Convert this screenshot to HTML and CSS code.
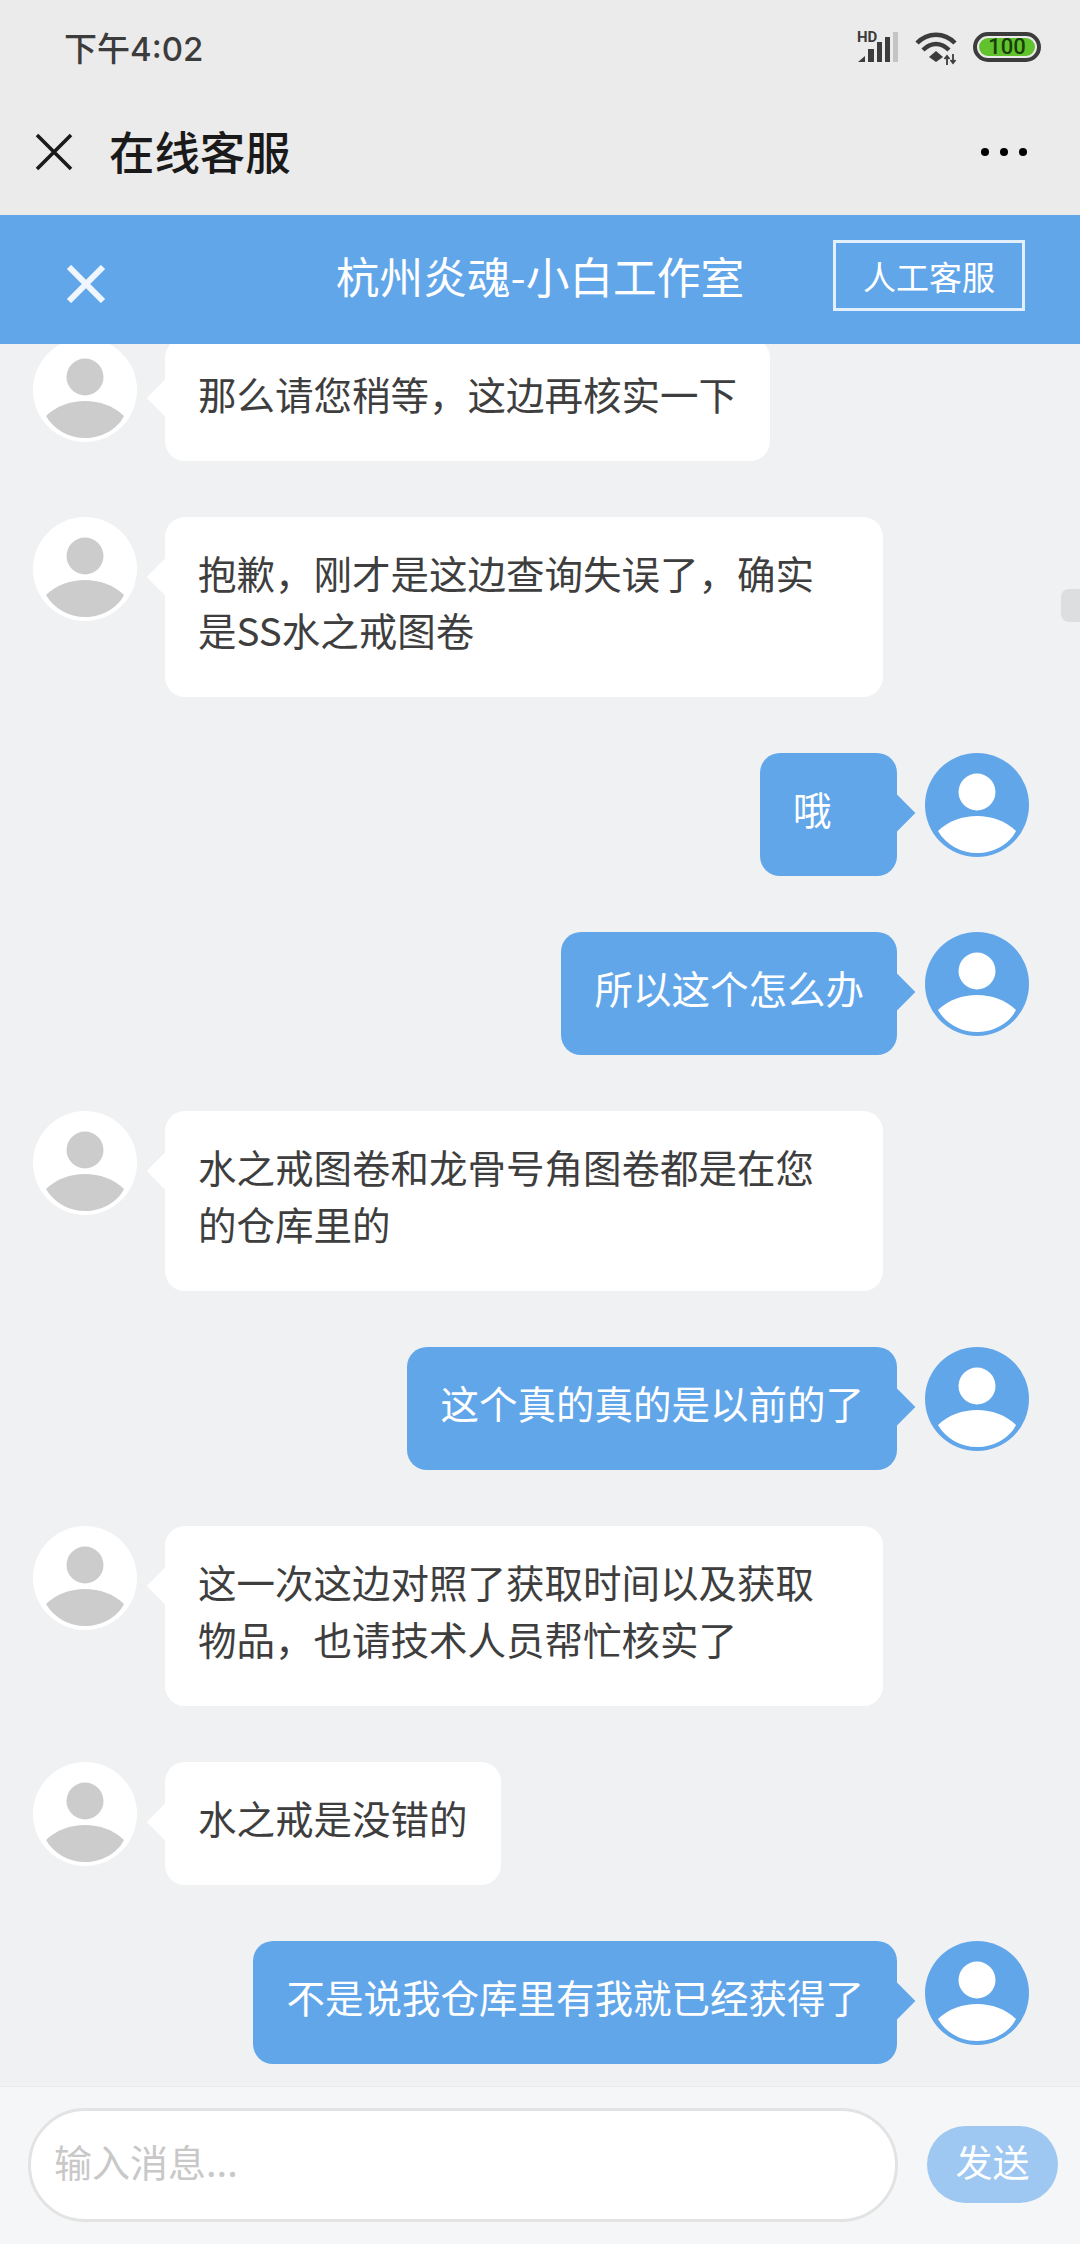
FILE: index.html
```html
<!DOCTYPE html>
<html lang="zh-CN">
<head>
    <meta charset="UTF-8">
    <meta name="viewport" content="width=device-width, initial-scale=1.0">
    <title>在线客服</title>
    <link rel="stylesheet" href="styles.css">
</head>
<body>
    <svg class="defs" width="0" height="0">
        <symbol id="person" viewBox="0 0 104 104">
            <circle cx="52" cy="39" r="18.5"/>
            <path d="M13 78C23 68 38 63 52 63C66 63 81 68 91 78C84 92 68 100 52 100C36 100 21 92 13 78Z"/>
        </symbol>
    </svg>

    <div class="status-bar">
        <span class="time">下午4:02</span>
        <div class="status-icons">
            <div class="signal">
                <span class="hd">HD</span>
                <svg class="signal-bars" width="42" height="32" viewBox="0 0 42 32">
                    <path d="M1 31L8 25V31Z" fill="#3c3c3c"/>
                    <rect x="11" y="18" width="6" height="13" fill="#3c3c3c"/>
                    <rect x="20" y="11" width="5" height="20" fill="#3c3c3c"/>
                    <rect x="28" y="6" width="5" height="25" fill="#3c3c3c"/>
                    <rect x="36" y="1" width="5" height="30" fill="#c4c4c4"/>
                </svg>
            </div>
            <svg class="wifi" width="42" height="34" viewBox="0 0 42 34">
                <path d="M2 12C13 1 29 1 40 12" fill="none" stroke="#3c3c3c" stroke-width="4.5"/>
                <path d="M8 19C16 11 26 11 34 19" fill="none" stroke="#3c3c3c" stroke-width="4.5"/>
                <path d="M14 26L21 20L28 26L21 31Z" fill="#3c3c3c"/>
                <path d="M32 25V34M34.5 28L32 25L29.5 28M38 23V32M35.5 29L38 32L40.5 29" fill="none" stroke="#3c3c3c" stroke-width="1.8"/>
            </svg>
            <div class="battery"><span class="battery-level">100</span></div>
        </div>
    </div>

    <div class="nav-bar">
        <svg class="nav-close" width="38" height="38" viewBox="0 0 38 38">
            <path d="M2 2L36 36M36 2L2 36" stroke="#1a1a1a" stroke-width="3.6" fill="none"/>
        </svg>
        <span class="nav-title">在线客服</span>
        <div class="nav-more"><i></i><i></i><i></i></div>
    </div>

    <div class="chat-header">
        <div class="header-left">
            <svg class="header-close" width="40" height="38" viewBox="0 0 40 38">
                <path d="M3 2L37 36M37 2L3 36" stroke="#fff" stroke-width="6" fill="none" opacity="0.9"/>
            </svg>
        </div>
        <span class="header-title">杭州炎魂-小白工作室</span>
        <div class="header-right">
            <button class="human-btn">人工客服</button>
        </div>
    </div>

    <div class="chat-list">
        <div class="msg">
            <svg class="avatar"><use href="#person"/></svg>
            <div class="bubble">那么请您稍等，这边再核实一下</div>
        </div>
        <div class="msg">
            <svg class="avatar"><use href="#person"/></svg>
            <div class="bubble">抱歉，刚才是这边查询失误了，确实是SS水之戒图卷</div>
        </div>
        <div class="msg mine">
            <div class="bubble">哦</div>
            <svg class="avatar"><use href="#person"/></svg>
        </div>
        <div class="msg mine">
            <div class="bubble">所以这个怎么办</div>
            <svg class="avatar"><use href="#person"/></svg>
        </div>
        <div class="msg">
            <svg class="avatar"><use href="#person"/></svg>
            <div class="bubble">水之戒图卷和龙骨号角图卷都是在您的仓库里的</div>
        </div>
        <div class="msg mine">
            <div class="bubble">这个真的真的是以前的了</div>
            <svg class="avatar"><use href="#person"/></svg>
        </div>
        <div class="msg">
            <svg class="avatar"><use href="#person"/></svg>
            <div class="bubble">这一次这边对照了获取时间以及获取物品，也请技术人员帮忙核实了</div>
        </div>
        <div class="msg">
            <svg class="avatar"><use href="#person"/></svg>
            <div class="bubble">水之戒是没错的</div>
        </div>
        <div class="msg mine">
            <div class="bubble">不是说我仓库里有我就已经获得了</div>
            <svg class="avatar"><use href="#person"/></svg>
        </div>
        <div class="scroll-thumb"></div>
    </div>

    <div class="input-bar">
        <input type="text" class="msg-input" placeholder="输入消息...">
        <button class="send-btn">发送</button>
    </div>
</body>
</html>
```

FILE: styles.css
```css
* {
    box-sizing: border-box;
}

body {
    margin: 0;
    width: 1080px;
    height: 2244px;
    display: flex;
    flex-direction: column;
    overflow: hidden;
    font-family: "Noto Sans CJK SC", "Noto Sans", sans-serif;
    background-color: #eff1f3;
}

.defs {
    position: absolute;
}

.status-bar {
    height: 96px;
    flex: none;
    display: flex;
    align-items: center;
    justify-content: space-between;
    padding: 0 39px 2px 64px;
    background-color: #ebebeb;
}

.time {
    font-family: Inter, "Noto Sans CJK SC", sans-serif;
    font-size: 33px;
    font-weight: 500;
    color: #3c3c3c;
}

.status-icons {
    display: flex;
    align-items: center;
    gap: 16px;
}

.signal {
    position: relative;
    width: 42px;
    height: 32px;
}

.signal-bars {
    display: block;
}

.hd {
    position: absolute;
    top: 0;
    left: 0;
    font-family: Roboto, sans-serif;
    font-size: 15px;
    font-weight: 700;
    line-height: 12px;
    color: #3c3c3c;
}

.wifi {
    margin-top: 2px;
}

.battery {
    width: 68px;
    height: 30px;
    padding: 2px;
    border: 4px solid #3c3c3c;
    border-radius: 15px;
    display: flex;
}

.battery-level {
    flex: 1;
    border-radius: 9px;
    background-color: #62c22d;
    color: #17400b;
    font-family: Roboto, sans-serif;
    font-size: 22px;
    font-weight: 500;
    line-height: 18px;
    text-align: center;
}

.nav-bar {
    height: 119px;
    flex: none;
    display: flex;
    align-items: center;
    padding: 0 53px 7px 35px;
    background-color: #ebebeb;
}

.nav-title {
    margin-left: 36px;
    padding-bottom: 5px;
    font-size: 45.4px;
    font-weight: 500;
    color: #1a1a1a;
}

.nav-more {
    margin-left: auto;
    display: flex;
    gap: 11px;
}

.nav-more i {
    width: 8px;
    height: 8px;
    border-radius: 50%;
    background-color: #000;
}

.chat-header {
    height: 129px;
    flex: none;
    position: relative;
    z-index: 1;
    display: grid;
    grid-template-columns: 1fr auto 1fr;
    align-items: center;
    padding: 0 55px;
    background-color: #62a6ea;
}

.header-close {
    display: block;
    margin: 8px 0 0 11px;
}

.header-title {
    font-size: 43.7px;
    color: #fff;
    padding-bottom: 9px;
}

.header-right {
    display: flex;
    justify-content: flex-end;
}

.human-btn {
    width: 192px;
    height: 71px;
    margin-bottom: 8px;
    padding: 0;
    border: 3px solid #e3effb;
    background: none;
    color: #fff;
    font-family: inherit;
    font-size: 33px;
}

.chat-list {
    flex: 1;
    min-height: 0;
    position: relative;
    display: flex;
    flex-direction: column;
    gap: 56px;
    margin-top: -6px;
    padding: 0 51px 0 33px;
    overflow: hidden;
}

.msg {
    display: flex;
    align-items: flex-start;
    gap: 28px;
}

.msg.mine {
    justify-content: flex-end;
}

.avatar {
    width: 104px;
    height: 104px;
    flex: none;
    border-radius: 50%;
    background-color: #fff;
    fill: #cccccc;
}

.mine .avatar {
    background-color: #62a6ea;
    fill: #fff;
}

.bubble {
    position: relative;
    max-width: 718px;
    min-width: 137px;
    padding: 27px 33px 39px;
    border-radius: 20px;
    background-color: #fff;
    color: #3e3e3e;
    font-size: 38.5px;
    line-height: 57px;
}

.bubble::after {
    content: "";
    position: absolute;
    top: 47px;
    left: -13px;
    width: 26px;
    height: 26px;
    background-color: #fff;
    transform: rotate(45deg);
}

.mine .bubble {
    background-color: #62a6ea;
    color: #fff;
}

.mine .bubble::after {
    left: auto;
    right: -13px;
    background-color: #62a6ea;
}

.scroll-thumb {
    position: absolute;
    top: 251px;
    right: -8px;
    width: 27px;
    height: 33px;
    border-radius: 8px;
    background-color: #dcdee0;
}

.input-bar {
    height: 158px;
    flex: none;
    display: flex;
    align-items: center;
    gap: 29px;
    padding: 0 22px 2px 28px;
    border-top: 1px solid #e9eaeb;
    background-color: #f5f6f7;
}

.msg-input {
    width: 870px;
    height: 114px;
    padding: 0 23px 8px;
    border: 3px solid #e3e3e3;
    border-radius: 57px;
    background-color: #fff;
    font-family: inherit;
    font-size: 38px;
    outline: none;
}

.msg-input::placeholder {
    color: #c8c8c8;
}

.send-btn {
    width: 131px;
    height: 77px;
    padding: 0 0 8px;
    border: none;
    border-radius: 39px;
    background-color: #9ec8f1;
    color: #fff;
    font-family: inherit;
    font-size: 37px;
}
```
